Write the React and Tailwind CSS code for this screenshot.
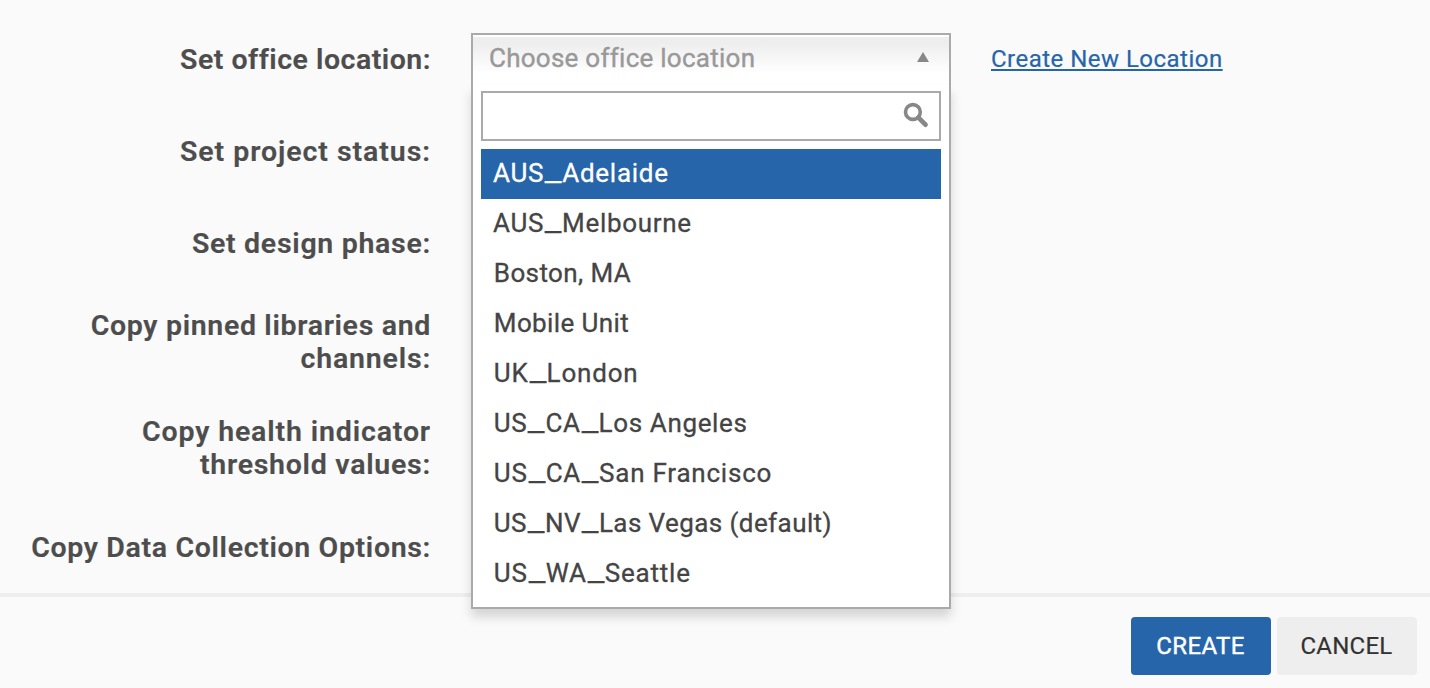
import React from "react";

const LABELS = [
  { h: "h-[92px]", lines: [["Set office location:", "tracking-[0.5px]"]] },
  { h: "h-[92px]", lines: [["Set project status:", "tracking-[0.95px]"]] },
  { h: "h-[92px]", lines: [["Set design phase:", "tracking-[0.71px]"]] },
  {
    h: "h-[106px]",
    lines: [
      ["Copy pinned libraries and", "tracking-[0.67px]"],
      ["channels:", "tracking-[0.82px]"],
    ],
  },
  {
    h: "h-[106px]",
    lines: [
      ["Copy health indicator", "tracking-[0.86px]"],
      ["threshold values:", "tracking-[0.74px]"],
    ],
  },
  { h: "h-[92px]", lines: [["Copy Data Collection Options:", "tracking-[0.66px]"]] },
];

const OPTIONS = [
  ["AUS_Adelaide", "tracking-[0.73px]"],
  ["AUS_Melbourne", "tracking-[0.68px]"],
  ["Boston, MA", "tracking-[0.4px]"],
  ["Mobile Unit", "tracking-[0.38px]"],
  ["UK_London", "tracking-[0.8px]"],
  ["US_CA_Los Angeles", "tracking-[0.64px]"],
  ["US_CA_San Francisco", "tracking-[0.77px]"],
  ["US_NV_Las Vegas (default)", "tracking-[0.42px]"],
  ["US_WA_Seattle", "tracking-[0.79px]"],
];

function OptionText({ text }) {
  return text.split(/(_)/).map((part, i) =>
    part === "_" ? (
      <span
        key={i}
        className="inline-block w-[18px] -translate-y-px scale-x-[1.42] text-center tracking-normal"
      >
        _
      </span>
    ) : (
      part
    )
  );
}

function LocationSelect() {
  return (
    <div className="relative z-10 h-[52px] w-[480px] border-2 border-b-0 border-[#aaa] bg-white pt-0.5">
      <div className="flex h-[46px] items-center justify-between bg-linear-to-b from-[#eee] from-[14%] to-white to-[78%] pr-5 pl-4 text-[26px] text-[#999]">
        <span className="-mt-1 tracking-[0.26px] [-webkit-text-stroke:0.4px]">
          Choose office location
        </span>
        <svg className="-mt-1.5 h-2.5 w-3" viewBox="0 0 12 10" fill="#888">
          <path d="M6 0 12 10H0z" />
        </svg>
      </div>
      <div className="absolute top-[50px] -left-0.5 w-[480px] border-2 border-t-0 border-[#aaa] bg-white px-2 pt-1.5 pb-2 shadow-[0_8px_10px_rgba(0,0,0,0.15)]">
        <div className="flex h-[50px] items-center justify-end border-2 border-[#aaa] bg-white pr-2.5">
          <svg className="-mt-0.5 h-[26px] w-[26px]" viewBox="0 0 26 26" fill="none" stroke="#888">
            <circle cx="9.9" cy="10" r="7.4" strokeWidth="3.6" />
            <path d="m15.4 15.6 7.1 7" strokeWidth="4.8" strokeLinecap="round" />
          </svg>
        </div>
        <ul className="mt-2">
          {OPTIONS.map(([text, tracking], i) => (
            <li
              key={text}
              className={`h-[50px] text-[26px] leading-[48px] whitespace-nowrap [-webkit-text-stroke:0.3px] ${tracking} ${
                i === 0 ? "bg-[#2665aa] text-white" : "text-[#444]"
              } ${i < 2 ? "pl-3" : "pl-[12.8px]"}`}
            >
              <OptionText text={text} />
            </li>
          ))}
        </ul>
      </div>
    </div>
  );
}

export default function App() {
  return (
    <div className="h-[688px] w-[1430px] overflow-hidden bg-[#fafafa] font-['Roboto',sans-serif]">
      <div className="flex h-[597px] border-b-4 border-[#eee] pt-[13px]">
        <div className="flex w-[431px] shrink-0 flex-col">
          {LABELS.map((row) => (
            <div
              key={row.lines[0][0]}
              className={`flex flex-col items-end justify-center text-[28.5px] leading-[33px] font-semibold whitespace-nowrap text-[#4d4d4d] [-webkit-text-stroke:0.2px] ${row.h}`}
            >
              {row.lines.map(([text, tracking]) => (
                <span key={text} className={tracking}>
                  {text}
                </span>
              ))}
            </div>
          ))}
        </div>
        <div className="ml-10 flex h-[92px] gap-10 pt-5">
          <LocationSelect />
          <a
            href="#"
            className="mt-2.5 h-8 text-[24px] leading-8 tracking-[0.48px] whitespace-nowrap text-[#2665aa] underline decoration-2 underline-offset-2 [-webkit-text-stroke:0.2px] [text-decoration-skip-ink:none]"
          >
            Create New Location
          </a>
        </div>
      </div>
      <div className="flex justify-end gap-1.5 pt-5 pr-[13px]">
        <button className="h-[58px] w-[140px] rounded-[4px] bg-[#2665aa] pr-px text-[24px] tracking-[0.4px] text-white [-webkit-text-stroke:0.4px]">
          CREATE
        </button>
        <button className="h-[58px] w-[140px] rounded-[4px] bg-[#eee] pr-px text-[24px] tracking-[0.25px] text-[#333] [-webkit-text-stroke:0.2px]">
          CANCEL
        </button>
      </div>
    </div>
  );
}
